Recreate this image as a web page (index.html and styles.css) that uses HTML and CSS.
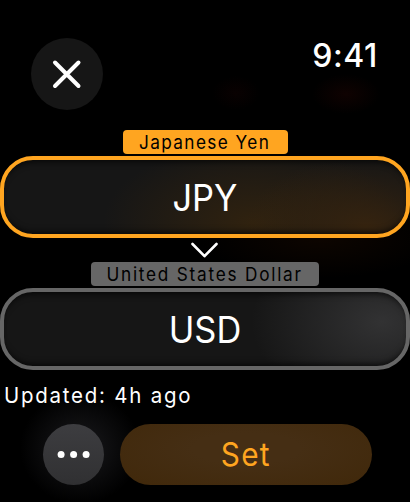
FILE: index.html
```
<!DOCTYPE html>
<html lang="en">
<head>
  <meta charset="UTF-8" />
  <meta name="viewport" content="width=device-width, initial-scale=1.0" />
  <title>Currency</title>
  <link rel="stylesheet" href="styles.css">
</head>
<body>
  <div class="watch">
    <header>
      <button class="close" aria-label="Close">
        <svg width="72" height="72" viewBox="0 0 72 72">
          <path d="M24 24.5 L47.5 48 M47.5 24.5 L24 48" />
        </svg>
      </button>
      <div class="time">9:41</div>
    </header>

    <main>
      <div class="label from-label"><span>Japanese Yen</span></div>
      <button class="currency from"><span>JPY</span></button>

      <svg class="chevron" width="28" height="18" viewBox="0 0 28 18">
        <path d="M1.5 2 L13.5 14.2 L25.5 2" />
      </svg>

      <div class="label to-label"><span>United States Dollar</span></div>
      <button class="currency to"><span>USD</span></button>
    </main>

    <p class="updated"><span>Updated: 4h ago</span></p>

    <footer>
      <button class="more" aria-label="More">
        <svg width="61" height="61" viewBox="0 0 61 61">
          <circle cx="18.1" cy="30.5" r="3.5" />
          <circle cx="30.6" cy="30.5" r="3.5" />
          <circle cx="43.1" cy="30.5" r="3.5" />
        </svg>
      </button>
      <button class="set"><span>Set</span></button>
    </footer>
  </div>
</body>
</html>
```
FILE: styles.css
```
* {
  margin: 0;
  padding: 0;
  box-sizing: border-box;
  font-family: Inter, Roboto, "Liberation Sans", sans-serif;
}

body {
  background: #000;
  color: #fff;
}

button {
  border: none;
  color: inherit;
  cursor: pointer;
}

svg {
  display: block;
  fill: none;
  stroke: #fff;
  stroke-linecap: round;
  stroke-linejoin: round;
}

/* slightly condensed lettering */
.label span, .currency span, .set span, .updated span {
  display: inline-block;
  transform: scaleX(0.93);
}

.watch {
  width: 410px;
  height: 502px;
  overflow: hidden;
  display: flex;
  flex-direction: column;
  background:
    radial-gradient(ellipse 34px 20px at 346px 94px, #0f0201, transparent),
    radial-gradient(ellipse 24px 17px at 236px 93px, #090101, transparent),
    radial-gradient(ellipse 120px 40px at 320px 238px, #0d0500, transparent),
    radial-gradient(ellipse 60px 56px at 80px 448px, #1a1a1d, transparent),
    #000;
}

header {
  height: 130px;
  padding: 38px 32px 0 31px;
  display: flex;
  justify-content: space-between;
  align-items: flex-start;
}

.close {
  width: 72px;
  height: 72px;
  border-radius: 50%;
  background: #161616;
}

.close svg {
  stroke-width: 4;
}

.time {
  font-size: 32px;
  font-weight: 500;
  line-height: 36px;
  letter-spacing: 0.6px;
}

main {
  display: flex;
  flex-direction: column;
  align-items: center;
}

.label {
  height: 24px;
  border-radius: 4px;
  display: flex;
  justify-content: center;
  font-size: 18.5px;
  line-height: 25px;
  color: #000;
  white-space: nowrap;
}

.from-label {
  width: 165px;
  background: #ffa520;
  letter-spacing: 1.5px;
}

.to-label {
  width: 228px;
  background: #666;
  letter-spacing: 1.9px;
}

.currency {
  width: 410px;
  height: 82px;
  margin-top: 2px;
  border: 4px solid;
  border-radius: 33px;
  font-size: 37px;
  line-height: 76px;
  box-shadow: inset 0 7px 6px -5px rgba(0, 0, 0, 0.7), inset 0 -7px 6px -5px rgba(0, 0, 0, 0.7);
}

.from {
  border-color: #ffa520;
  background:
    radial-gradient(ellipse 120px 70px at 90% 90%, #35230f, transparent),
    radial-gradient(ellipse 150px 80px at 62% 85%, #30220f, transparent),
    #161616;
}

.to {
  border-color: #666;
  background:
    radial-gradient(ellipse 130px 90px at 94% 40%, #323233, transparent),
    #161616;
}

.chevron {
  margin: 4px 0 2px;
  stroke-width: 2.6;
}

.updated {
  margin-top: 10px;
  padding-left: 4px;
  height: 44px;
  font-size: 22px;
  line-height: 30px;
  letter-spacing: 1.9px;
}

.updated span {
  transform-origin: left;
}

footer {
  display: flex;
  gap: 16px;
  padding-left: 43px;
}

.more {
  width: 61px;
  height: 61px;
  border-radius: 50%;
  background: linear-gradient(#3d3d40, #303032);
}

.more svg {
  fill: #fff;
  stroke: none;
}

.set {
  width: 252px;
  height: 61px;
  border-radius: 31px;
  background: radial-gradient(ellipse at 50% 40%, #452e14 30%, #40280a);
  color: #ffa520;
  font-size: 32px;
  line-height: 60px;
  letter-spacing: 1.3px;
}
```
